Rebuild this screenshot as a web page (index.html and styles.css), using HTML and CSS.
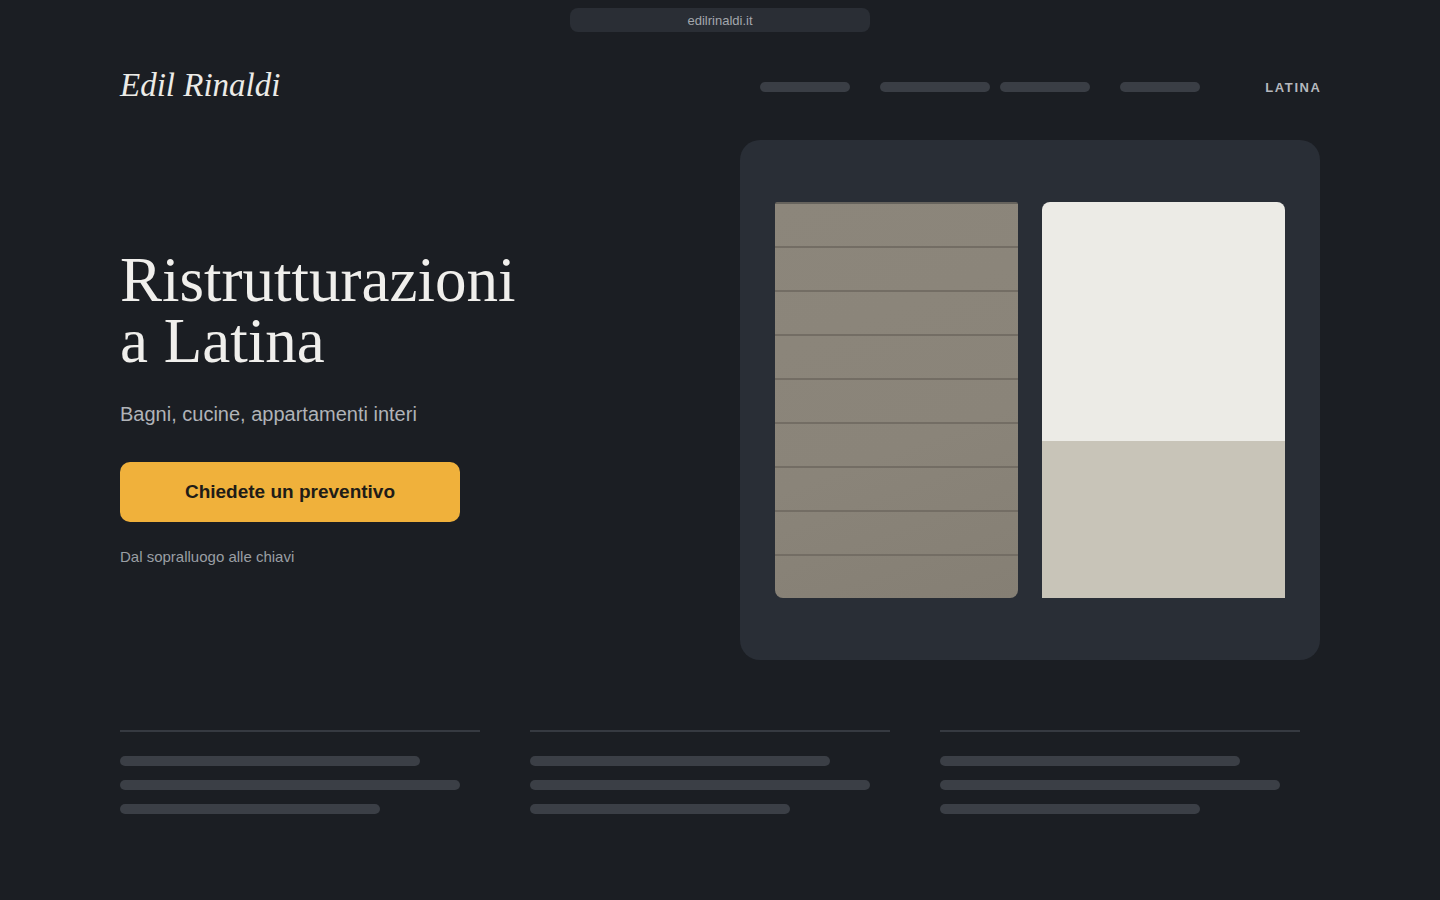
FILE: index.html
```html
<!DOCTYPE html>
<html lang="it">
<head>
<meta charset="utf-8">
<title>Edil Rinaldi</title>
<link rel="stylesheet" href="styles.css">
</head>
<body>
<div class="urlbar">edilrinaldi.it</div>
<div class="page">
  <header class="header">
    <div class="logo">Edil Rinaldi</div>
    <nav class="nav">
      <span class="navbar w90"></span>
      <span class="navbar w110 ml30"></span>
      <span class="navbar w90 ml10"></span>
      <span class="navbar w80 ml30"></span>
      <span class="city">LATINA</span>
    </nav>
  </header>

  <section class="hero">
    <div class="hero-text">
      <h1 class="title"><span class="tline">Ristrutturazioni</span><span class="tline">a Latina</span></h1>
      <p class="subtitle">Bagni, cucine, appartamenti interi</p>
      <a class="cta" href="#">Chiedete un preventivo</a>
      <p class="note">Dal sopralluogo alle chiavi</p>
    </div>
    <div class="card">
      <div class="panel slats">
        <div class="slat"></div><div class="slat"></div><div class="slat"></div>
        <div class="slat"></div><div class="slat"></div><div class="slat"></div>
        <div class="slat"></div><div class="slat"></div><div class="slat"></div>
      </div>
      <div class="panel split">
        <div class="split-top"></div>
        <div class="split-bottom"></div>
      </div>
    </div>
  </section>

  <section class="features">
    <div class="feature">
      <span class="fbar w300"></span>
      <span class="fbar w340"></span>
      <span class="fbar w260"></span>
    </div>
    <div class="feature">
      <span class="fbar w300"></span>
      <span class="fbar w340"></span>
      <span class="fbar w260"></span>
    </div>
    <div class="feature">
      <span class="fbar w300"></span>
      <span class="fbar w340"></span>
      <span class="fbar w260"></span>
    </div>
  </section>
</div>
</body>
</html>
```

FILE: styles.css
```css
* { box-sizing: border-box; }
html, body { margin: 0; padding: 0; }
body {
  background: #1b1e23;
  width: 1440px;
  height: 900px;
  overflow: hidden;
  font-family: "Liberation Sans", Arial, sans-serif;
  color: #e8e8e6;
}

.urlbar {
  width: 300px;
  height: 24px;
  margin: 8px auto 0;
  border-radius: 8px;
  background: #2a2e35;
  color: #a3a7ad;
  font-size: 13px;
  line-height: 25px;
  text-align: center;
}

.page { padding: 0 120px; }

.header {
  margin-top: 28px;
  height: 54px;
  display: flex;
  align-items: center;
  justify-content: space-between;
}
.logo {
  font-family: "Liberation Serif", "Times New Roman", serif;
  font-style: italic;
  font-size: 33px;
  color: #ecebe7;
  line-height: 1;
  margin-top: -4px;
}
.nav { display: flex; align-items: center; }
.navbar {
  display: block;
  height: 10px;
  border-radius: 5px;
  background: #3a3e45;
}
.w90 { width: 90px; }
.w110 { width: 110px; }
.w80 { width: 80px; }
.ml30 { margin-left: 30px; }
.ml10 { margin-left: 10px; }
.city {
  margin-left: 65px;
  margin-right: -1.6px;
  font-size: 13px;
  font-weight: 700;
  letter-spacing: 1.6px;
  color: #b5b8bd;
}

.hero {
  margin-top: 26px;
  display: flex;
  justify-content: space-between;
}
.hero-text { padding-top: 110px; }
.title {
  margin: 0;
  font-family: "Liberation Serif", "Times New Roman", serif;
  font-weight: 400;
  font-size: 63px;
  color: #f0efec;
}
.tline {
  display: block;
  height: 61px;
  line-height: 61px;
}
.subtitle {
  margin: 28px 0 0;
  font-size: 20px;
  line-height: 28px;
  color: #b0b3b8;
}
.cta {
  display: flex;
  align-items: center;
  justify-content: center;
  width: 340px;
  height: 60px;
  margin-top: 34px;
  border-radius: 10px;
  background: #f0b13b;
  color: #1f1c17;
  font-size: 19px;
  font-weight: 700;
  text-decoration: none;
}
.note {
  margin: 25px 0 0;
  font-size: 15px;
  line-height: 20px;
  color: #9a9ea4;
}

.card {
  width: 580px;
  height: 520px;
  border-radius: 20px;
  background: #292e36;
  padding: 62px 35px 0;
  display: flex;
  gap: 24px;
}
.panel { flex: 1; height: 396px; }
.slats {
  display: flex;
  flex-direction: column;
  border-radius: 2px 2px 8px 8px;
  overflow: hidden;
  background: linear-gradient(160deg, #8c867b 0%, #8a8479 60%, #857f74 100%);
  border-top: 2px solid #66635d;
}
.slat { flex: 1; }
.slat + .slat { border-top: 2px solid #736d64; }
.split {
  display: flex;
  flex-direction: column;
  border-radius: 8px 8px 0 0;
  overflow: hidden;
}
.split-top { height: 239px; background: #ecebe6; }
.split-bottom { flex: 1; background: #c8c4b8; }

.features {
  margin-top: 70px;
  display: flex;
  gap: 50px;
}
.feature {
  width: 360px;
  border-top: 2px solid #363a41;
  padding-top: 24px;
  display: flex;
  flex-direction: column;
  gap: 14px;
}
.fbar {
  display: block;
  height: 10px;
  border-radius: 5px;
  background: #3b3f46;
}
.w300 { width: 300px; }
.w340 { width: 340px; }
.w260 { width: 260px; }
```
